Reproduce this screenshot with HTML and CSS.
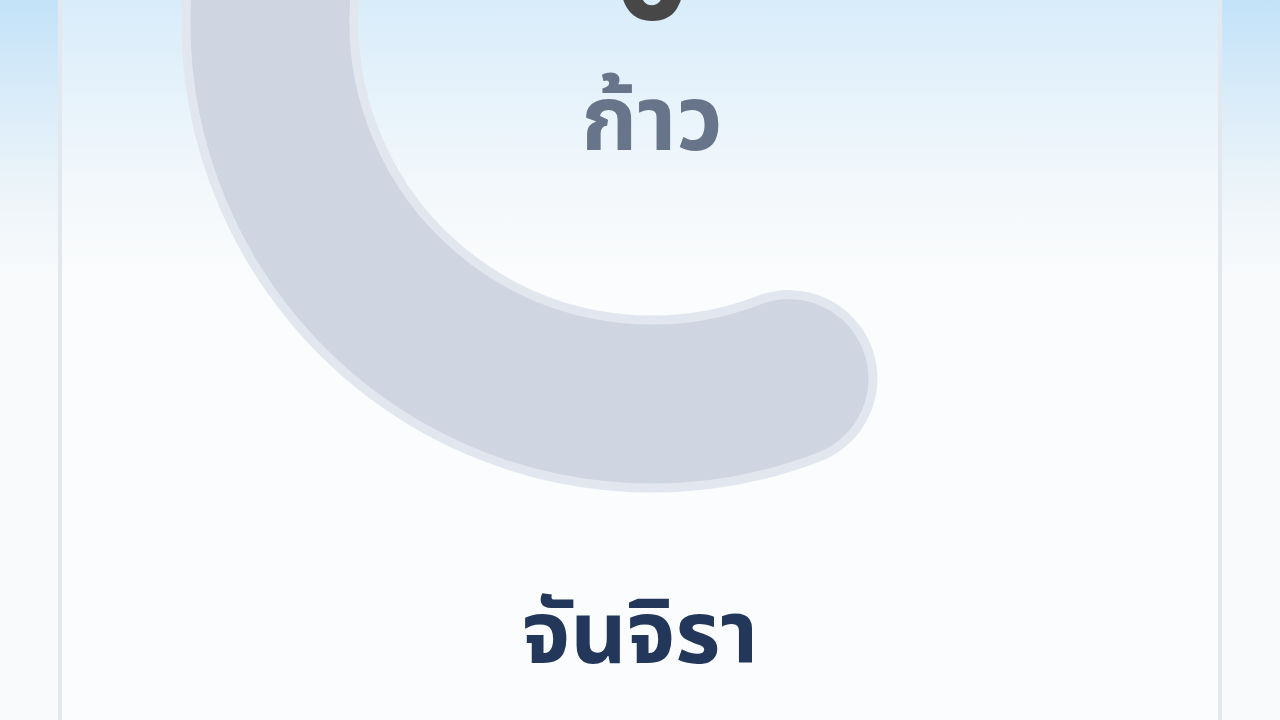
FILE: index.html
```html
<!DOCTYPE html>
<html lang="th">
<head>
<meta charset="utf-8">
<title>Steps</title>
<link rel="stylesheet" href="styles.css">
</head>
<body>
<main class="page">
  <section class="card">
    <div class="gauge">
      <svg class="gauge-ring" viewBox="-480 -22 960 496" width="960" height="496" aria-hidden="true">
        <path class="ring-edge" d="M 136.9 356.6 A 382 382 0 1 1 191 -330.8" />
        <path class="ring-core" d="M 136.9 356.6 A 382 382 0 1 1 191 -330.8" />
      </svg>
      <div class="gauge-label">
        <div class="steps-value">0</div>
        <div class="steps-unit">ก้าว</div>
      </div>
    </div>
    <h1 class="member-name">จันจิรา</h1>
  </section>
</main>
</body>
</html>
```
FILE: styles.css
```css
html, body {
  margin: 0;
  padding: 0;
  height: 720px;
  overflow: hidden;
}
body {
  background: linear-gradient(180deg, #c3e2f8 0px, #dcedf9 110px, #eef5f9 200px, #f8fafc 275px, #f8fafc 100%);
  font-family: "Noto Sans Thai", "Noto Sans", "Noto Sans CJK SC", sans-serif;
}
.page {
  display: flex;
  justify-content: center;
  padding: 0 58px;
  height: 720px;
}
.card {
  flex: 1;
  border-left: 4px solid #e3e7ee;
  border-right: 4px solid #e3e7ee;
  background: rgba(255, 255, 255, 0.36);
  display: flex;
  flex-direction: column;
  align-items: center;
}
.gauge {
  position: relative;
  width: 960px;
  height: 496px;
  margin-left: 24px;
  flex: none;
}
.gauge-ring {
  display: block;
}
.ring-edge {
  fill: none;
  stroke: #e2e7ef;
  stroke-width: 177;
  stroke-linecap: round;
}
.ring-core {
  fill: none;
  stroke: #cfd6e1;
  stroke-width: 159;
  stroke-linecap: round;
}
.gauge-label {
  position: absolute;
  top: 0;
  left: 0;
  right: 0;
  display: flex;
  flex-direction: column;
  align-items: center;
}
.steps-value {
  font-size: 130px;
  font-weight: 700;
  line-height: 1;
  color: #474747;
  margin-top: -85px;
}
.steps-unit {
  font-size: 90px;
  font-weight: 700;
  line-height: 1.2;
  color: #67748a;
  margin-top: 24px;
}
.member-name {
  margin: 89px 0 0;
  font-size: 87px;
  font-weight: 700;
  line-height: 1.2;
  color: #22375a;
}
```
